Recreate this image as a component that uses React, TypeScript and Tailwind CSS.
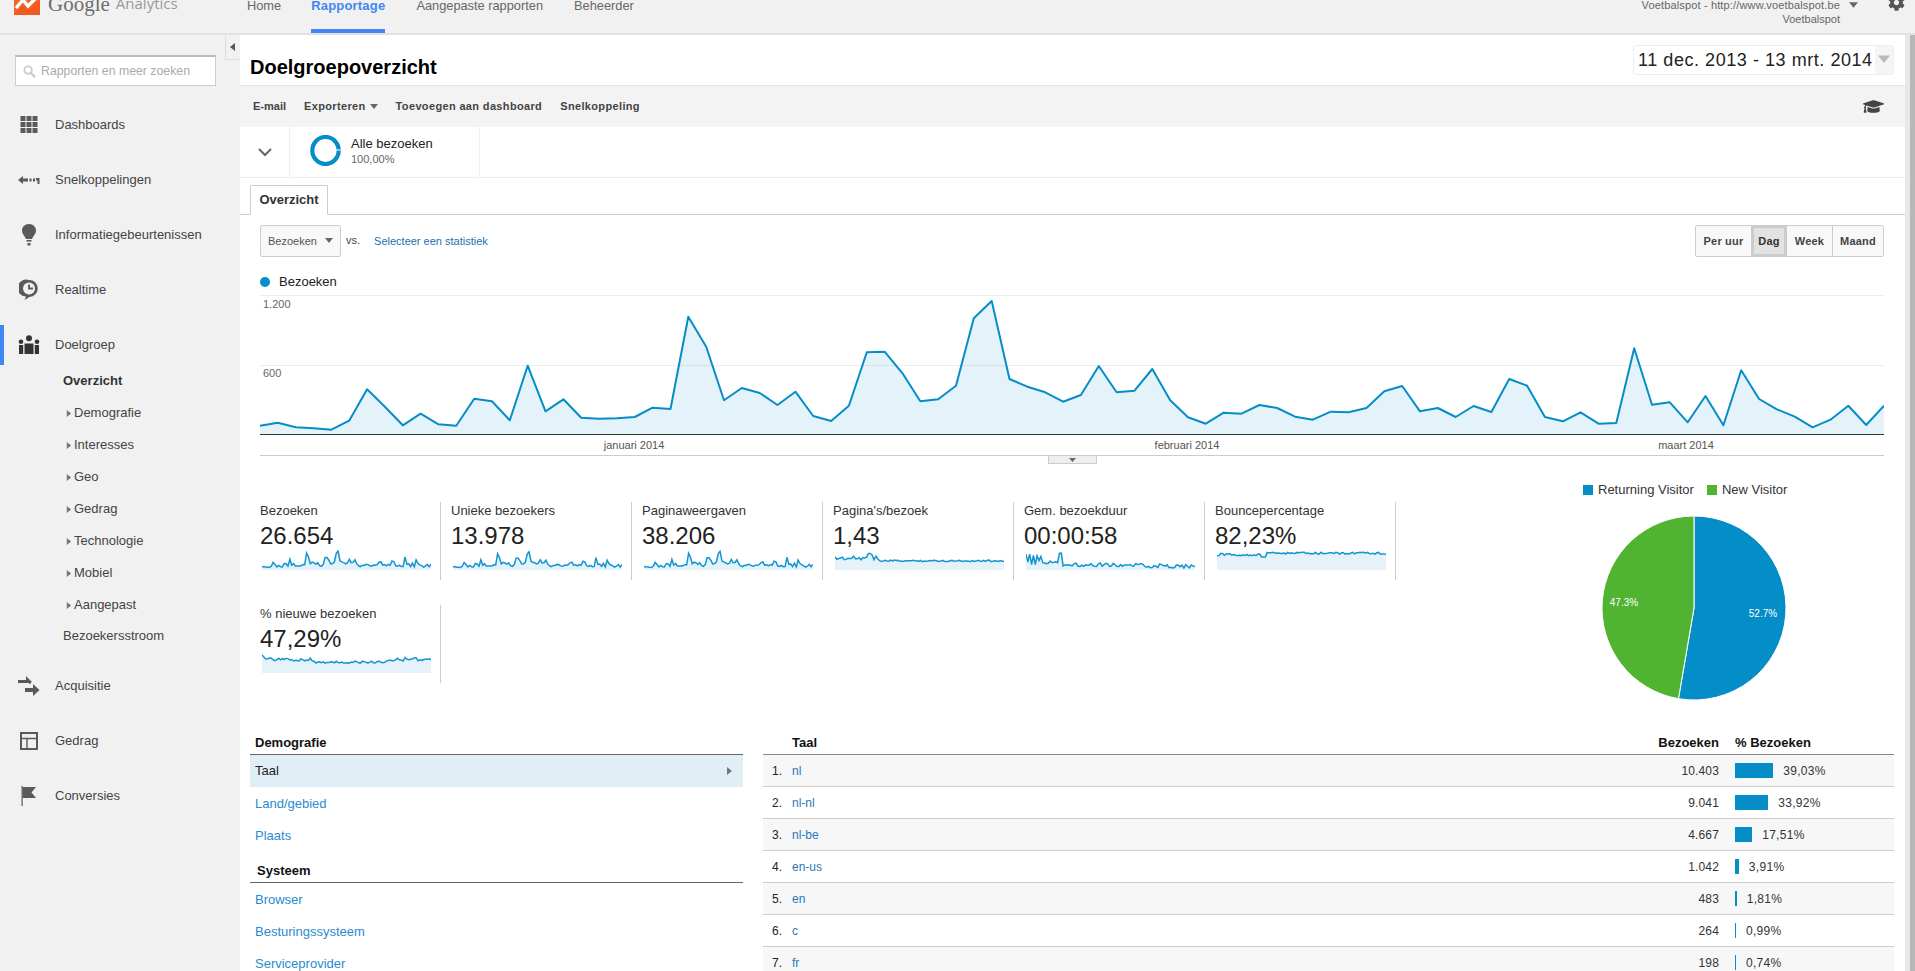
import React from "react";
import { FaGraduationCap, FaCog } from "react-icons/fa";

const Z = [467,458,472,475,479,452,358,410,466,431,463,467,386,394,451,287,424,388,443,446,445,441,413,417,140,230,391,354,369,405,365,438,453,407,247,245,310,394,388,347,145,93,327,350,367,395,375,288,367,362,297,391,442,461,428,431,405,414,440,449,425,427,414,364,348,424,414,441,408,426,327,347,441,454,427,461,459,235,404,397,457,378,466,301,387,418,440,472,449,407,465,407];
const chartH = 139;
const stepX = 1624 / 91;
const pts = Z.map((z, i) => [i * stepX, 270 + z / 3 - 295] as [number, number]);
const toStr = (p: [number, number][]) => p.map(([x, y]) => `${x.toFixed(1)},${y.toFixed(1)}`).join(" ");

const rnd = (i: number, s: number) => {
  const v = Math.sin(i * 12.9898 + s * 78.233) * 43758.5453;
  return v - Math.floor(v);
};
const sparkMain = (k: number) => Z.map((z) => 18 - (((493 - z) / 400) * 17 * k));
const sparkPages = Z.map((_, i) => (i === 18 || i === 19 ? 3.5 : i === 20 ? 5 : i < 24 ? 6 + rnd(i, 1) * 4.5 : 10 + rnd(i, 2) * 1.6));
const sparkDur = Z.map((_, i) =>
  i < 9 ? (i % 2 === 0 ? 3 + rnd(i, 3) * 4 : 10 + rnd(i, 3) * 5) : i === 18 || i === 19 ? 3 + rnd(i, 3) * 2 : i < 18 ? 11 + rnd(i, 4) * 3.5 : 11.5 + (i / 91) * 3 + rnd(i, 5) * 4
);
const sparkBounce = Z.map((_, i) => (i < 24 ? 3.5 + rnd(i, 6) * 2.4 : i < 27 ? 7 : 2.2 + rnd(i, 7) * 2));
const sparkNew = Z.map((_, i) => (i < 3 ? 2 + i * 2 : i < 28 ? 5 + rnd(i, 8) * 3 : i < 68 ? 8 + rnd(i, 9) * 2.2 : 4.5 + rnd(i, 10) * 3.5));

function Spark({ ys }: { ys: number[] }) {
  const p = ys.map((y, i) => [(i * 169) / 91, y] as [number, number]);
  return (
    <svg width="169" height="20" viewBox="0 0 169 20" className="block ml-[2px]">
      <polygon points={`0,20 ${toStr(p)} 169,20`} fill="#e6f2fa" />
      <polyline points={toStr(p)} fill="none" stroke="#1396d0" strokeWidth="1.5" />
    </svg>
  );
}

function Tri({ dir = "down", color = "#555", size = 8 }: { dir?: "down" | "left" | "right"; color?: string; size?: number }) {
  const d = dir === "down" ? "M0 1H8L4 6Z" : dir === "left" ? "M6 0V8L1 4Z" : "M2 0V8L7 4Z";
  return (
    <svg width={size} height={size} viewBox="0 0 8 8" className="block shrink-0">
      <path d={d} fill={color} />
    </svg>
  );
}

const Ic = {
  grid: (
    <svg width="18" height="17" viewBox="0 0 18 17" fill="#5a5a5a">
      {[0, 6, 12].map((x) => [0, 6, 12].map((y) => <rect key={`${x}${y}`} x={x + 0.5} y={y} width="5" height="5" />))}
    </svg>
  ),
  short: (
    <svg width="22" height="10" viewBox="0 0 22 10" fill="#5a5a5a">
      <path d="M0 5L5 1V3.5H10V6.5H5V9Z" />
      <rect x="11.5" y="3.5" width="2" height="3" />
      <rect x="15" y="3.5" width="2" height="3" />
      <path d="M18 3H21.5V9H19.5V5.5H18Z" />
    </svg>
  ),
  bulb: (
    <svg width="16" height="22" viewBox="0 0 16 22" fill="#5a5a5a">
      <path d="M8 0C3.5 0 1 3 1 6.5C1 10 3.5 11.5 5 15H11C12.5 11.5 15 10 15 6.5C15 3 12.5 0 8 0Z" />
      <rect x="5.5" y="16" width="5" height="1.6" />
      <rect x="6.5" y="19" width="3" height="2.5" />
    </svg>
  ),
  clock: (
    <svg width="20" height="22" viewBox="0 0 20 22">
      <path d="M10 1A8.5 8.5 0 1 0 7 17.5L5.5 21L10.5 18A8.5 8.5 0 0 0 10 1Z" fill="#5a5a5a" />
      <circle cx="10" cy="9.5" r="6" fill="#f1f1f1" />
      <path d="M10 5.5V9.5H14" stroke="#5a5a5a" strokeWidth="1.8" fill="none" />
    </svg>
  ),
  people: (
    <svg width="22" height="20" viewBox="0 0 22 20" fill="#333">
      <circle cx="11" cy="3.2" r="3" />
      <circle cx="3" cy="6.8" r="2.3" />
      <circle cx="19" cy="6.8" r="2.3" />
      <path d="M6.5 8.5H15.5V19H6.5Z" />
      <path d="M1 10H5.2V19H1Z" />
      <path d="M16.8 10H21V19H16.8Z" />
    </svg>
  ),
  acq: (
    <svg width="22" height="22" viewBox="0 0 22 22" fill="#5a5a5a">
      <path d="M0 5H8V1L14 7L11 9.5V8H0Z" />
      <path d="M7 13H15V9L21.5 15L15 21V17H7Z" />
    </svg>
  ),
  beh: (
    <svg width="18" height="18" viewBox="0 0 18 18" fill="none" stroke="#5a5a5a" strokeWidth="2">
      <rect x="1" y="1" width="16" height="16" />
      <path d="M1 6.5H17M7 6.5V17" strokeWidth="1.4" />
    </svg>
  ),
  flag: (
    <svg width="16" height="20" viewBox="0 0 16 20" fill="#5a5a5a">
      <rect x="0.5" y="0" width="1.2" height="20" />
      <path d="M1.5 1H15L10.5 6.5L15 12H1.5Z" />
    </svg>
  ),
};

function NavItem({ icon, label, active }: { icon: React.ReactNode; label: string; active?: boolean }) {
  return (
    <div className="h-[55px] flex items-center">
      <div className={`h-[40px] w-full flex items-center ${active ? "border-l-4 border-[#4285f4]" : "border-l-4 border-transparent"}`}>
        <div className="w-[51px] flex justify-center pl-[8px] pr-[9px] shrink-0">{icon}</div>
        <span className="text-[13px] text-[#444]">{label}</span>
      </div>
    </div>
  );
}

function Sub({ label, bold, arrow, cls = "h-[32px]" }: { label: string; bold?: boolean; arrow?: boolean; cls?: string }) {
  return (
    <div className={`${cls} flex items-center text-[13px] ${bold ? "font-bold text-[#333]" : "text-[#444]"} ${arrow ? "pl-[65px]" : "pl-[63px]"}`}>
      {arrow && (
        <span className="w-[9px] shrink-0">
          <Tri dir="right" color="#777" size={7} />
        </span>
      )}
      {label}
    </div>
  );
}

function Metric({ label, value, ys }: { label: string; value: string; ys: number[] }) {
  return (
    <div className="w-[191px] h-[78px] border-r border-[#ccc] mb-[25px] pl-[10px]">
      <div className="text-[13px] leading-[16px] mt-px text-[#333]">{label}</div>
      <div className="text-[24px] leading-[28px] mt-[3px] text-[#222]">{value}</div>
      <Spark ys={ys} />
    </div>
  );
}

function LinkRow({ label }: { label: string }) {
  return <div className="h-[32px] flex items-center pl-[5px] pt-[2px] text-[#2b8bcb]">{label}</div>;
}

const rows = [
  ["nl", "10.403", 39.03, "39,03%"],
  ["nl-nl", "9.041", 33.92, "33,92%"],
  ["nl-be", "4.667", 17.51, "17,51%"],
  ["en-us", "1.042", 3.91, "3,91%"],
  ["en", "483", 1.81, "1,81%"],
  ["c", "264", 0.99, "0,99%"],
  ["fr", "198", 0.74, "0,74%"],
] as const;

function Btn({ label, active, last }: { label: string; active?: boolean; last?: boolean }) {
  return (
    <div
      className={`h-full flex items-center justify-center text-[11px] font-bold tracking-[0.2px] ${last ? "" : "border-r"} border-[#ccc] ${
        active ? "bg-[#e2e2e2] text-[#333] shadow-[inset_0_0_0_2px_#ccc]" : "bg-[#f8f8f8] text-[#444]"
      } ${label === "Per uur" ? "w-[56px]" : label === "Dag" ? "w-[35px]" : label === "Week" ? "w-[46px]" : "w-[50px]"}`}
    >
      {label}
    </div>
  );
}

export default function App() {
  const a = (189.72 * Math.PI) / 180;
  const ex = 92 + 92 * Math.sin(a);
  const ey = 92 - 92 * Math.cos(a);
  return (
    <div className="w-[1915px] h-[971px] overflow-hidden bg-white font-['Liberation_Sans',Arial,sans-serif] text-[#333]">
      <header className="h-[35px] bg-[#f1f1f1] border-b-2 border-[#e2e2e2] flex relative overflow-hidden">
        <div className="w-[247px] flex pl-[14px] shrink-0">
          <svg width="26" height="15" viewBox="0 0 26 15" className="block">
            <rect x="0" y="-11" width="26" height="26" fill="#f26522" />
            <path d="M2 8L9 0L14 6L24 -4" fill="none" stroke="#fff" strokeWidth="3.4" />
            <path d="M0 15L9 5L14 11L26 -1V15Z" fill="#f05a22" />
          </svg>
          <span className="ml-[8px] -mt-[10px] text-[21px] leading-[28px] text-[#6e6e6e] font-['Liberation_Serif',serif]">Google</span>
          <span className="ml-[6px] -mt-[8px] text-[15px] leading-[22px] text-[#999] font-['Open_Sans',sans-serif]">Analytics</span>
        </div>
        <nav className="flex h-[33px] text-[12.8px] text-[#666]">
          <span className="-mt-[2px] leading-[16px]">Home</span>
          <span className="ml-[30px] h-[33px] border-b-4 border-[#4285f4] text-[13px] tracking-[0.2px] font-bold text-[#4285f4] leading-[12px]">Rapportage</span>
          <span className="ml-[31px] -mt-[2px] leading-[16px]">Aangepaste rapporten</span>
          <span className="ml-[31px] -mt-[2px] leading-[16px]">Beheerder</span>
        </nav>
        <div className="ml-auto flex items-start text-[11px] text-[#666] tracking-[0.15px]">
          <div className="text-right -mt-[2px] leading-[14px]">
            <div>Voetbalspot - http://www.voetbalspot.be</div>
            <div className="tracking-normal">Voetbalspot</div>
          </div>
          <div className="ml-[9px] mt-px">
            <Tri color="#666" size={9} />
          </div>
          <FaCog className="ml-[30px] mr-[10px] -mt-[6px] text-[#555]" size={17} />
        </div>
      </header>

      <div className="flex h-[936px]">
        <aside className="w-[240px] shrink-0 bg-[#f1f1f1] relative">
          <div className="absolute right-0 top-0 w-[15px] h-[25px] border border-t-0 border-r-0 border-[#ddd] flex items-center justify-center">
            <Tri dir="left" color="#555" size={8} />
          </div>
          <div className="ml-[15px] mt-[20px] w-[201px] h-[31px] bg-white border border-[#ccc] border-t-2 border-t-[#bbb] flex items-center pl-[7px]">
            <svg width="13" height="13" viewBox="0 0 14 14" fill="none" stroke="#ccc" strokeWidth="2" className="shrink-0">
              <circle cx="5.5" cy="5.5" r="4" />
              <path d="M8.5 8.5L13 13" strokeWidth="2.6" />
            </svg>
            <span className="ml-[5px] text-[12.3px] text-[#aaa]">Rapporten en meer zoeken</span>
          </div>
          <div className="mt-[11px]">
            <NavItem icon={Ic.grid} label="Dashboards" />
            <NavItem icon={Ic.short} label="Snelkoppelingen" />
            <NavItem icon={Ic.bulb} label="Informatiegebeurtenissen" />
            <NavItem icon={Ic.clock} label="Realtime" />
            <NavItem icon={Ic.people} label="Doelgroep" active />
            <div className="-mt-[8px] mb-[7px]">
              <Sub label="Overzicht" bold cls="h-[33px]" />
              <Sub label="Demografie" arrow />
              <Sub label="Interesses" arrow />
              <Sub label="Geo" arrow />
              <Sub label="Gedrag" arrow />
              <Sub label="Technologie" arrow />
              <Sub label="Mobiel" arrow />
              <Sub label="Aangepast" arrow />
              <Sub label="Bezoekersstroom" cls="h-[30px]" />
            </div>
            <NavItem icon={Ic.acq} label="Acquisitie" />
            <NavItem icon={Ic.beh} label="Gedrag" />
            <NavItem icon={Ic.flag} label="Conversies" />
          </div>
        </aside>

        <main className="w-[1665px] shrink-0">
          <div className="h-[51px] flex items-start justify-between pl-[10px] pr-[11px] border-b border-[#e5e5e5]">
            <h1 className="mt-[20px] text-[20px] leading-[24px] font-bold text-black">Doelgroepoverzicht</h1>
            <div className="mt-[10px] w-[261px] h-[30px] border border-[#eee] rounded-[3px] flex items-center overflow-hidden">
              <span className="pl-[4px] text-[18px] text-[#222] tracking-[0.55px] whitespace-nowrap w-[241px]">11 dec. 2013 - 13 mrt. 2014</span>
              <span className="flex-1 h-full bg-[#f5f5f5] flex items-center justify-center">
                <Tri color="#bbb" size={12} />
              </span>
            </div>
          </div>
          <div className="h-[41px] bg-[#f3f3f3] flex items-center gap-[18px] pl-[13px] pr-[21px] text-[11px] font-bold text-[#444] tracking-[0.35px]">
            <span className="tracking-normal">E-mail</span>
            <span className="flex items-center gap-[4px]">
              Exporteren <Tri color="#666" size={8} />
            </span>
            <span>Toevoegen aan dashboard</span>
            <span>Snelkoppeling</span>
            <FaGraduationCap className="ml-auto text-[#444]" size={21} />
          </div>
          <div className="h-[51px] flex border-b border-[#eee]">
            <div className="w-[50px] border-r border-[#eee] flex items-center justify-center">
              <svg width="14" height="9" viewBox="0 0 14 9" fill="none" stroke="#666" strokeWidth="2">
                <path d="M1 1L7 7L13 1" />
              </svg>
            </div>
            <div className="w-[190px] border-r border-[#eee] flex items-center pl-[20px]">
              <svg width="31" height="31" viewBox="0 0 31 31" fill="none" className="shrink-0 -mt-[3px]">
                <ellipse cx="15.5" cy="15.5" rx="13.2" ry="13.5" stroke="#058dc7" strokeWidth="4.2" />
                <rect x="26" y="14.5" width="5" height="1" fill="#fff" />
              </svg>
              <div className="ml-[10px] -mt-[2px]">
                <div className="text-[13px] leading-[16px] text-[#222]">Alle bezoeken</div>
                <div className="text-[11px] leading-[14px] text-[#666]">100,00%</div>
              </div>
            </div>
          </div>
          <div className="h-[37px] border-b border-[#ccc] pl-[10px] pt-[7px]">
            <div className="w-[78px] h-[30px] bg-white border border-[#ccc] border-b-white rounded-t-[2px] flex items-center justify-center text-[13px] font-bold text-[#333]">
              Overzicht
            </div>
          </div>
          <div className="pl-[20px] pr-[21px]">
            <div className="mt-[10px] h-[32px] flex items-center">
              <div className="w-[81px] h-[32px] bg-[#f8f8f8] border border-[#ccc] rounded-[2px] flex items-center justify-between px-[7px] text-[11px] text-[#555]">
                Bezoeken <Tri color="#666" size={8} />
              </div>
              <span className="ml-[5px] -mt-[2px] text-[11px] text-[#444]">vs.</span>
              <span className="ml-[14px] text-[11px] text-[#1b6fb0]">Selecteer een statistiek</span>
              <div className="ml-auto h-[32px] flex border border-[#ccc] rounded-[2px] overflow-hidden">
                <Btn label="Per uur" />
                <Btn label="Dag" active />
                <Btn label="Week" />
                <Btn label="Maand" last />
              </div>
            </div>
            <div className="mt-[15px] h-[20px] flex items-center text-[13px] text-[#222]">
              <span className="w-[10px] h-[10px] rounded-full bg-[#058dc7]" />
              <span className="ml-[9px]">Bezoeken</span>
            </div>
            <svg width="1624" height="169" viewBox="0 0 1624 169" className="block mt-[3px]">
              <line x1="0" y1="0.5" x2="1624" y2="0.5" stroke="#eee" />
              <line x1="0" y1="70.5" x2="1624" y2="70.5" stroke="#eee" />
              <polygon points={`0,${chartH} ${toStr(pts)} 1624,${chartH}`} fill="#058dc7" fillOpacity="0.11" />
              <polyline points={toStr(pts)} fill="none" stroke="#058dc7" strokeWidth="2" strokeLinejoin="round" />
              <line x1="0" y1="139.5" x2="1624" y2="139.5" stroke="#333" />
              <line x1="0" y1="160.5" x2="1624" y2="160.5" stroke="#ccc" />
              <text x="3" y="13" fontSize="11" fill="#666">1.200</text>
              <text x="3" y="82" fontSize="11" fill="#666">600</text>
              <text x="374" y="154" fontSize="11" fill="#555" textAnchor="middle">januari 2014</text>
              <text x="927" y="154" fontSize="11" fill="#555" textAnchor="middle">februari 2014</text>
              <text x="1426" y="154" fontSize="11" fill="#555" textAnchor="middle">maart 2014</text>
              <rect x="788.5" y="160.5" width="48" height="8" fill="#eee" stroke="#ccc" />
              <path d="M809 163H816L812.5 167Z" fill="#666" />
            </svg>
          </div>

          <div className="h-[268px] flex">
            <div className="ml-[10px] mt-[38px] w-[1146px] flex flex-wrap content-start">
              <Metric label="Bezoeken" value="26.654" ys={sparkMain(1)} />
              <Metric label="Unieke bezoekers" value="13.978" ys={sparkMain(0.95)} />
              <Metric label="Paginaweergaven" value="38.206" ys={sparkMain(0.98)} />
              <Metric label="Pagina's/bezoek" value="1,43" ys={sparkPages} />
              <Metric label="Gem. bezoekduur" value="00:00:58" ys={sparkDur} />
              <Metric label="Bouncepercentage" value="82,23%" ys={sparkBounce} />
              <Metric label="% nieuwe bezoeken" value="47,29%" ys={sparkNew} />
            </div>
            <div className="ml-[187px] mt-[18px]">
              <div className="h-[16px] flex items-center text-[13px] text-[#333]">
                <span className="w-[10px] h-[10px] bg-[#058dc7]" />
                <span className="ml-[5px]">Returning Visitor</span>
                <span className="ml-[13px] w-[10px] h-[10px] bg-[#50b432]" />
                <span className="ml-[5px]">New Visitor</span>
              </div>
              <svg width="184" height="184" viewBox="0 0 184 184" className="block ml-[19px] mt-[18px]">
                <path d={`M92 92L92 0A92 92 0 1 1 ${ex.toFixed(2)} ${ey.toFixed(2)}Z`} fill="#058dc7" stroke="#fff" strokeWidth="1" />
                <path d={`M92 92L${ex.toFixed(2)} ${ey.toFixed(2)}A92 92 0 0 1 92 0Z`} fill="#50b432" stroke="#fff" strokeWidth="1" />
                <text x="161" y="101" fontSize="10" fill="#fff" textAnchor="middle">52.7%</text>
                <text x="22" y="90" fontSize="10" fill="#fff" textAnchor="middle">47.3%</text>
              </svg>
            </div>
          </div>

          <div className="flex gap-[20px] pl-[10px] pr-[11px]">
            <div className="w-[493px] shrink-0 text-[13px]">
              <div className="h-[23px] border-b border-[#666] pl-[5px] font-bold text-[#111] leading-[22px]">Demografie</div>
              <div className="h-[32px] bg-[#e0eef5] flex items-center justify-between pl-[5px] pr-[10px] text-[#222]">
                Taal <Tri dir="right" color="#777" size={8} />
              </div>
              <LinkRow label="Land/gebied" />
              <LinkRow label="Plaats" />
              <div className="mt-[9px] h-[23px] border-b border-[#666] pl-[7px] font-bold text-[#111] leading-[22px]">Systeem</div>
              <LinkRow label="Browser" />
              <LinkRow label="Besturingssysteem" />
              <LinkRow label="Serviceprovider" />
            </div>
            <div className="flex-1 text-[12px]">
              <div className="h-[23px] border-b border-[#888] flex items-center text-[13px] font-bold text-[#111]">
                <span className="ml-[29px] flex-1">Taal</span>
                <span>Bezoeken</span>
                <span className="w-[159px] ml-[16px]">% Bezoeken</span>
              </div>
              {rows.map(([name, val, pct, txt], i) => (
                <div key={name} className={`h-[32px] border-b border-[#ccc] flex items-center ${i % 2 === 0 ? "bg-[#f7f7f7]" : "bg-white"}`}>
                  <span className="w-[19px] mt-px text-right text-[#222]">{i + 1}.</span>
                  <span className="ml-[10px] mt-px flex-1 text-[#2a78b8]">{name}</span>
                  <span className="mt-px text-[#333] tracking-[0.15px]">{val}</span>
                  <span className="w-[159px] ml-[16px] flex items-center">
                    <span className="h-[15px] bg-[#058dc7] shrink-0" style={{ width: Math.max(1, pct * 0.98) }} />
                    <span className="ml-[10px] mt-px text-[#333] tracking-[0.3px]">{txt}</span>
                  </span>
                </div>
              ))}
            </div>
          </div>
        </main>

        <div className="w-[10px] shrink-0 bg-[#e8e8e8] flex justify-end">
          <div className="w-[5px] h-full bg-[#b8b8b8]" />
        </div>
      </div>
    </div>
  );
}
